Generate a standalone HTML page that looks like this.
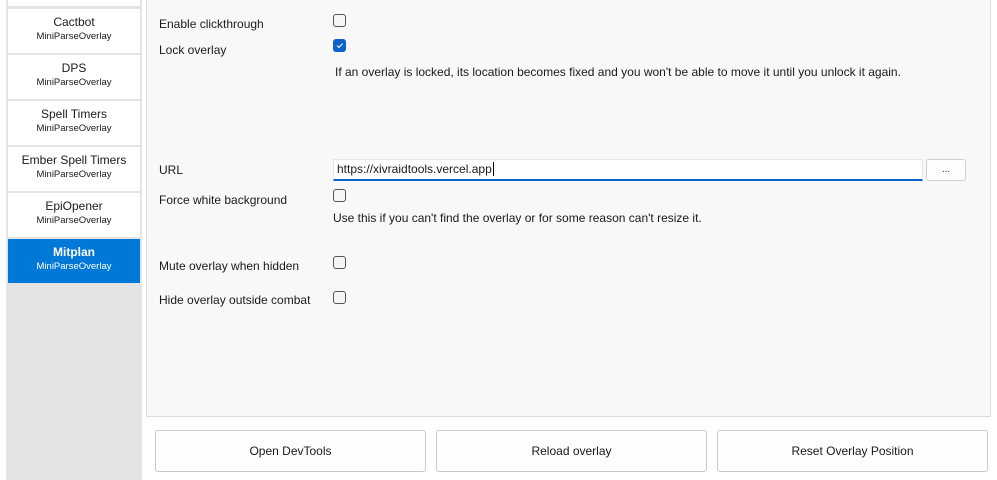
<!DOCTYPE html><html><head><style>
body{margin:0;width:997px;height:480px;background:#fff;font-family:"Liberation Sans",sans-serif;font-size:12px;color:#1a1a1a;position:relative;overflow:hidden}
.side{position:absolute;left:6px;top:0;width:136px;height:480px;background:#e3e4e3}
.it{position:absolute;left:2px;width:132px;height:44px;background:#fff;text-align:center}
.it .a{font-size:12px;margin-top:5px;line-height:16px}
.it .b{font-size:9.5px;line-height:14px}
.sel{background:#0078d7;color:#fff}
.sel .a{font-weight:bold}
.panel{position:absolute;left:146px;top:-1px;width:843px;height:416px;background:#f8f8f8;border:1px solid #dcdcdc}
.l{position:absolute;left:159px;font-size:12px}
.cb{position:absolute;left:333px;width:11px;height:11px;border:1px solid #555;border-radius:3px;background:#f5f5f5}
.ck{background:#0b63c9;border-color:#0b63c9}
.d{position:absolute;font-size:12px}
.btn{position:absolute;top:430px;width:269px;height:40px;border:1px solid #c8c8c8;border-radius:3px;background:#fdfdfd;text-align:center;line-height:40px;font-size:12px}
</style></head><body>
<div class="side">
<div class="it" style="top:-38px"></div>
<div class="it" style="top:9px"><div class="a">Cactbot</div><div class="b">MiniParseOverlay</div></div>
<div class="it" style="top:55px"><div class="a">DPS</div><div class="b">MiniParseOverlay</div></div>
<div class="it" style="top:101px"><div class="a">Spell Timers</div><div class="b">MiniParseOverlay</div></div>
<div class="it" style="top:147px"><div class="a">Ember Spell Timers</div><div class="b">MiniParseOverlay</div></div>
<div class="it" style="top:193px"><div class="a">EpiOpener</div><div class="b">MiniParseOverlay</div></div>
<div class="it sel" style="top:239px"><div class="a">Mitplan</div><div class="b">MiniParseOverlay</div></div>
</div>
<div class="panel"></div>
<div class="l" style="top:17px">Enable clickthrough</div>
<div class="cb" style="top:14px"></div>
<div class="l" style="top:43px">Lock overlay</div>
<div class="cb ck" style="top:39px"><svg width="11" height="11" style="position:absolute;left:0;top:0"><path d="M3 5.5l2 2 3.5-4" stroke="#fff" stroke-width="1" fill="none"/></svg></div>
<div class="d" style="left:335px;top:65px">If an overlay is locked, its location becomes fixed and you won't be able to move it until you unlock it again.</div>
<div class="l" style="top:163px">URL</div>
<div style="position:absolute;left:333px;top:159px;width:585px;height:19px;background:#fff;border:1px solid #e6e6e6;border-bottom:2px solid #0b63c9;font-size:12px;line-height:19px;padding-left:3px">https://xivraidtools.vercel.app<span style="border-left:1px solid #000;margin-left:1px"></span></div>
<div style="position:absolute;left:926px;top:159px;width:38px;height:20px;border:1px solid #d0d0d0;border-radius:3px;background:#fdfdfd;text-align:center;font-size:10px;line-height:20px">...</div>
<div class="l" style="top:193px">Force white background</div>
<div class="cb" style="top:189px"></div>
<div class="d" style="left:333px;top:211px">Use this if you can't find the overlay or for some reason can't resize it.</div>
<div class="l" style="top:259px">Mute overlay when hidden</div>
<div class="cb" style="top:256px"></div>
<div class="l" style="top:293px">Hide overlay outside combat</div>
<div class="cb" style="top:291px"></div>
<div class="btn" style="left:155px">Open DevTools</div>
<div class="btn" style="left:436px">Reload overlay</div>
<div class="btn" style="left:717px">Reset Overlay Position</div>
</body></html>
